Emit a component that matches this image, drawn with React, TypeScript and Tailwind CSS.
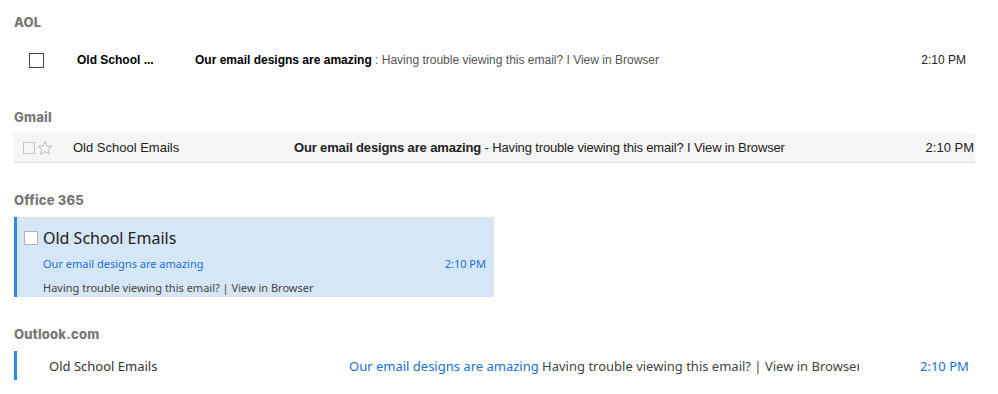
import React from "react";

const heading = "text-[13px] leading-4 font-extrabold text-[#777] tracking-[0.2px]";
const headFont = { fontFamily: "Inter, 'Noto Sans', sans-serif" } as React.CSSProperties;

function Star() {
  return (
    <svg width="16" height="16" viewBox="0 0 16 16" className="shrink-0">
      <path
        d="M8 1.2 L9.9 5.9 L14.9 6.2 L11 9.4 L12.3 14.3 L8 11.6 L3.7 14.3 L5 9.4 L1.1 6.2 L6.1 5.9 Z"
        fill="none"
        stroke="#bdbdbd"
        strokeWidth="1"
        strokeLinejoin="round"
      />
    </svg>
  );
}

export default function App() {
  return (
    <div className="w-[998px] h-[394px] bg-white pl-[14px] pt-[14px] overflow-hidden">
      {/* AOL */}
      <div className={heading} style={headFont}>AOL</div>
      <div
        className="mt-[14px] h-[32px] flex items-center text-[12px] text-[#222] pr-[32px]"
        style={{ fontFamily: "'Liberation Sans', Arial, sans-serif" }}
      >
        <div className="ml-[15px] w-[15px] h-[15px] border border-[#444] shrink-0" />
        <div className="ml-[33px] w-[118px] font-bold text-black shrink-0">Old School ...</div>
        <div className="flex-1 text-[#555]">
          <span className="font-bold text-black">Our email designs are amazing</span> : Having trouble viewing this email? I View in Browser
        </div>
        <div className="text-[#222]">2:10 PM</div>
      </div>

      {/* Gmail */}
      <div className={`mt-[33px] ${heading}`} style={headFont}>Gmail</div>
      <div
        className="mt-[8px] w-[961px] h-[30px] bg-[#f5f5f5] border-b border-[#dcdcdc] flex items-center text-[13px] text-[#222] pr-[1px]"
        style={{ fontFamily: "'Liberation Sans', Arial, sans-serif" }}
      >
        <div className="ml-[9px] w-[12px] h-[12px] border border-[#c4c4c4] shrink-0" />
        <div className="ml-[2px]"><Star /></div>
        <div className="ml-[20px] w-[221px] shrink-0">Old School Emails</div>
        <div className="flex-1 tracking-[-0.15px]">
          <span className="font-bold">Our email designs are amazing</span> - Having trouble viewing this email? I View in Browser
        </div>
        <div>2:10 PM</div>
      </div>

      {/* Office 365 */}
      <div className={`mt-[29px] ${heading}`} style={headFont}>Office 365</div>
      <div
        className="mt-[9px] w-[480px] h-[80px] bg-[#d5e6f7] border-l-[3px] border-[#2d8be0] pl-[7px] pr-[8px] flex flex-col"
        style={{ fontFamily: "'Noto Sans', 'Open Sans', sans-serif" }}
      >
        <div className="mt-[12px] flex items-center h-[18px]">
          <div className="w-[14px] h-[14px] bg-white border border-[#b5b5b5] shrink-0" />
          <div className="ml-[5px] text-[16px] leading-[18px] text-[#222]">Old School Emails</div>
        </div>
        <div className="mt-[9px] pl-[19px] flex items-center justify-between h-[16px] text-[11px] text-[#1672d4]">
          <span>Our email designs are amazing</span>
          <span>2:10 PM</span>
        </div>
        <div className="mt-[8px] pl-[19px] h-[16px] flex items-center text-[11px] text-[#444]">
          Having trouble viewing this email? | View in Browser
        </div>
      </div>

      {/* Outlook.com */}
      <div className={`mt-[29px] ${heading}`} style={headFont}>Outlook.com</div>
      <div
        className="mt-[9px] h-[29px] pt-[2px] border-l-[3px] border-[#2d8be0] flex items-center text-[13px]"
        style={{ fontFamily: "'Noto Sans', 'Open Sans', sans-serif" }}
      >
        <div className="ml-[32px] w-[300px] text-[#333] shrink-0">Old School Emails</div>
        <div className="w-[510px] shrink-0 whitespace-nowrap overflow-hidden">
          <span className="text-[#1672d4]">Our email designs are amazing</span>{" "}
          <span className="text-[#444]">Having trouble viewing this email? | View in Browser</span>
        </div>
        <div className="ml-[61px] text-[#1672d4]">2:10 PM</div>
      </div>
    </div>
  );
}
